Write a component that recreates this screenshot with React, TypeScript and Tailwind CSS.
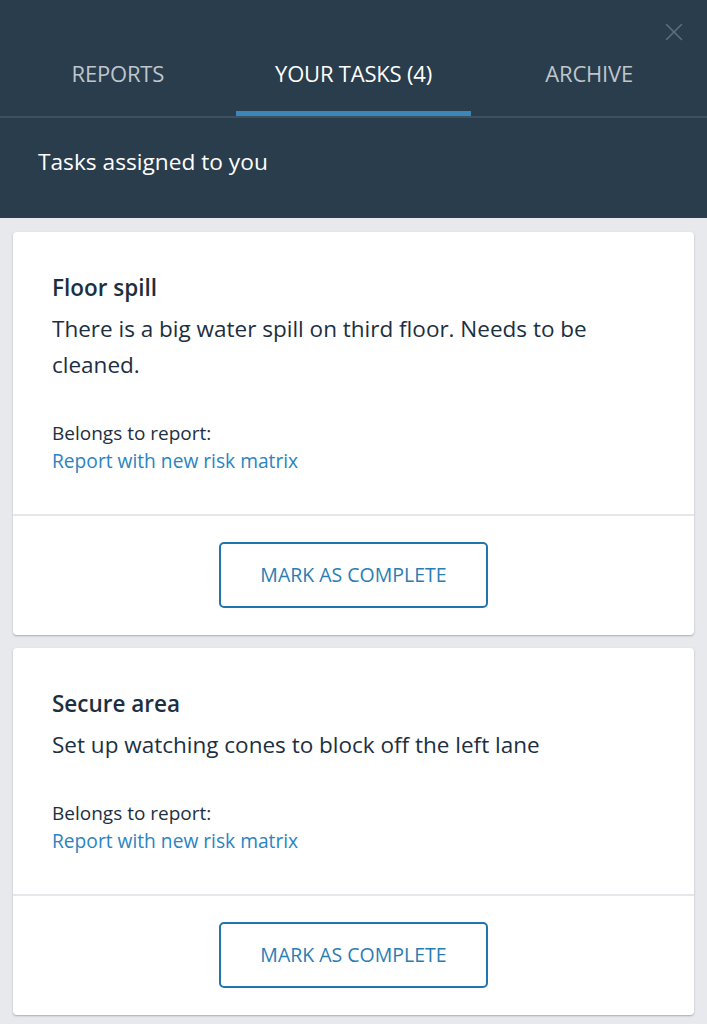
import { X } from "lucide-react";

const tasks = [
  {
    title: "Floor spill",
    description: "There is a big water spill on third floor. Needs to be cleaned.",
    report: "Report with new risk matrix",
  },
  {
    title: "Secure area",
    description: "Set up watching cones to block off the left lane",
    report: "Report with new risk matrix",
  },
];

const tabs = [
  { label: "REPORTS", active: false },
  { label: "YOUR TASKS (4)", active: true },
  { label: "ARCHIVE", active: false },
];

function TaskCard({ task }: { task: (typeof tasks)[number] }) {
  return (
    <div className="rounded-[4px] bg-white shadow-[0_1px_2px_rgba(40,60,80,0.35)]">
      <div className="px-[39px] pt-[42px] pb-[39px]">
        <h3 className="text-[22.5px] leading-[28px] font-semibold text-[#1d2f3f]">{task.title}</h3>
        <p className="mt-[9px] text-[22.5px] leading-[36px] text-[#1d2f3f]">{task.description}</p>
        <p className="mt-[36px] text-[19px] leading-[28px] text-[#1d2f3f]">Belongs to report:</p>
        <a href="#" className="block text-[19.2px] leading-[28px] text-[#2a84bf]">
          {task.report}
        </a>
      </div>
      <div className="flex justify-center border-t-2 border-[#e6e7ea] pt-[26px] pb-[27px]">
        <button className="h-[66px] w-[269px] rounded-[5px] border-2 border-[#2274ad] text-[19.5px] text-[#2a7db3]">
          MARK AS COMPLETE
        </button>
      </div>
    </div>
  );
}

export default function App() {
  return (
    <div className="min-h-screen bg-[#e8e9ec] font-['Open_Sans',sans-serif]">
      {/* Header */}
      <header className="relative bg-[#2a3d4c]">
        <button className="absolute right-[18px] top-[17px] text-[#5f707d]" aria-label="Close">
          <X size={30} strokeWidth={1.2} />
        </button>

        {/* Tabs */}
        <nav className="flex pt-[32px]">
          {tabs.map((tab) => (
            <div key={tab.label} className="flex h-[84px] flex-1 flex-col">
              <div
                className={`flex flex-1 items-center justify-center pt-[3px] text-[22px] font-medium tracking-[-0.2px] ${
                  tab.active ? "text-white" : "text-[#bfc6cc]"
                }`}
              >
                {tab.label}
              </div>
              <div className={`h-[5px] ${tab.active ? "bg-[#3a87b8]" : ""}`} />
            </div>
          ))}
        </nav>
        <div className="h-[2px] bg-[#3e5162]" />

        <div className="px-[38px] pt-[30px] pb-[42px] text-[22.7px] leading-[28px] font-medium text-white">
          Tasks assigned to you
        </div>
      </header>

      {/* Task list */}
      <main className="flex flex-col gap-[13px] px-[13px] pt-[14px] pb-[8px]">
        {tasks.map((task) => (
          <TaskCard key={task.title} task={task} />
        ))}
      </main>
    </div>
  );
}
